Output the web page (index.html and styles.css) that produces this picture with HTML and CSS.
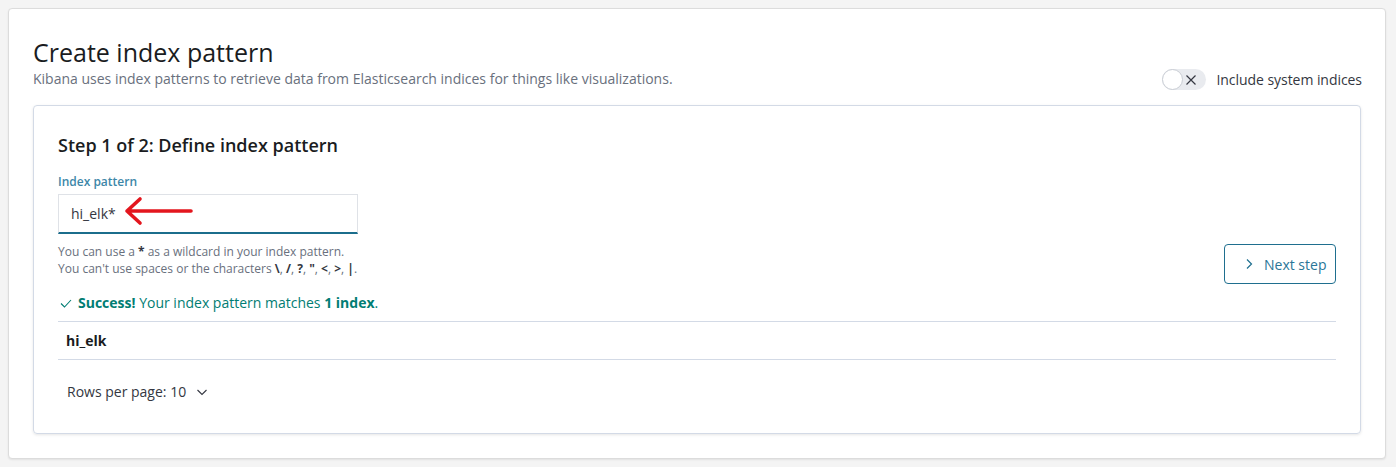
FILE: index.html
```html
<!DOCTYPE html>
<html>
<head>
<meta charset="utf-8">
<link rel="stylesheet" href="styles.css">
</head>
<body>
<div class="page">
  <div class="header">
    <div class="header-text">
      <h1 class="title">Create index pattern</h1>
      <p class="subtitle">Kibana uses index patterns to retrieve data from Elasticsearch indices for things like visualizations.</p>
    </div>
    <div class="switch-wrap">
      <span class="switch">
        <span class="knob"></span>
        <svg class="switch-x" width="12" height="12" viewBox="0 0 12 12"><path d="M1.5 1.5 L10.5 10.5 M10.5 1.5 L1.5 10.5" stroke="#343741" stroke-width="1.2" fill="none"/></svg>
      </span>
      <span class="switch-label">Include system indices</span>
    </div>
  </div>

  <div class="card">
    <h2 class="step-title">Step 1 of 2: Define index pattern</h2>
    <div class="form-line">
      <div class="form-row">
        <label class="field-label">Index pattern</label>
        <div class="input-wrap">
          <div class="input">hi_elk*</div>
          <svg class="annot" width="80" height="34" viewBox="0 0 80 34"><path d="M4 17 L68 17 M17 5 L4 17 L17 29" stroke="#e3161e" stroke-width="3.6" fill="none" stroke-linecap="round" stroke-linejoin="round"/></svg>
        </div>
        <div class="help">
          <div>You can use a <b>*</b> as a wildcard in your index pattern.</div>
          <div>You can't use spaces or the characters <b>\</b>, <b>/</b>, <b>?</b>, <b>"</b>, <b>&lt;</b>, <b>&gt;</b>, <b>|</b>.</div>
        </div>
      </div>
      <button class="next-btn">
        <svg width="16" height="16" viewBox="0 0 16 16"><path d="M6 3.5 L10.5 8 L6 12.5" stroke="#1f6f8f" stroke-width="1.2" fill="none"/></svg>
        <span>Next step</span>
      </button>
    </div>

    <div class="success">
      <svg width="14" height="14" viewBox="0 0 14 14"><path d="M2 7.5 L5.5 11 L12 4" stroke="#017d73" stroke-width="1.1" fill="none"/></svg>
      <span><b>Success!</b> Your index pattern matches <b>1 index</b>.</span>
    </div>

    <div class="table">
      <div class="row">hi_elk</div>
    </div>

    <div class="pager">
      <span>Rows per page: 10</span>
      <svg width="14" height="14" viewBox="0 0 14 14"><path d="M2.5 5 L7 9.5 L11.5 5" stroke="#343741" stroke-width="1.1" fill="none"/></svg>
    </div>
  </div>
</div>
</body>
</html>
```

FILE: styles.css
```css
html, body {
  margin: 0;
  padding: 0;
  background: #f4f4f4;
}
body {
  padding: 8px 10px 8px 8px;
  font-family: "Open Sans", "Liberation Sans", sans-serif;
  color: #343741;
}
.page {
  background: #fff;
  border: 1px solid #dcdcdc;
  border-radius: 4px;
  box-shadow: 0 1px 2px rgba(0,0,0,0.08);
  padding: 27px 24px 24px 24px;
  height: 398px;
}
.header {
  display: flex;
  justify-content: space-between;
  align-items: flex-end;
}
.title {
  margin: 0;
  font-size: 25px;
  line-height: 32px;
  font-weight: 400;
  color: #1a1c21;
}
.subtitle {
  margin: 1px 0 0 0;
  font-size: 14px;
  line-height: 20px;
  color: #69707d;
}
.switch-wrap {
  display: flex;
  align-items: center;
  gap: 10px;
  margin-bottom: -1px;
  margin-right: -1px;
}
.switch {
  position: relative;
  display: flex;
  align-items: center;
  justify-content: flex-end;
  width: 44px;
  height: 21px;
  border-radius: 11px;
  background: #e9ebef;
  box-sizing: border-box;
  padding-right: 9px;
}
.knob {
  position: absolute;
  left: 0;
  top: 0;
  width: 21px;
  height: 21px;
  border-radius: 50%;
  background: #fff;
  border: 1px solid #c9cdd4;
  box-sizing: border-box;
}
.switch-label {
  font-size: 14px;
  line-height: 20px;
  color: #343741;
  letter-spacing: -0.05px;
}
.card {
  margin-top: 16px;
  border: 1px solid #d3dae6;
  border-radius: 4px;
  box-shadow: 0 1px 3px rgba(0,0,0,0.10);
  padding: 25px 24px 24px 24px;
  height: 278px;
}
.step-title {
  margin: 0;
  font-size: 18px;
  line-height: 29px;
  font-weight: 600;
  color: #1a1c21;
}
.form-line {
  display: flex;
  justify-content: space-between;
  align-items: flex-end;
  margin-top: 12px;
}
.form-row {
  display: flex;
  flex-direction: column;
  margin-bottom: 6px;
}
.field-label {
  font-size: 12px;
  line-height: 20px;
  font-weight: 600;
  color: #3d87a8;
}
.input-wrap {
  position: relative;
  margin-top: 2px;
  width: 300px;
}
.input {
  box-sizing: border-box;
  height: 40px;
  border: 1px solid #dfe2e7;
  border-bottom: 2px solid #1b6d8c;
  background: #fff;
  padding: 0 12px;
  font-size: 14px;
  line-height: 38px;
  color: #343741;
}
.annot {
  position: absolute;
  left: 65px;
  top: 0px;
}
.help {
  margin-top: 9px;
  font-size: 12px;
  line-height: 17px;
  color: #69707d;
}
.help b {
  color: #343741;
}
.next-btn {
  display: flex;
  align-items: center;
  gap: 7px;
  box-sizing: border-box;
  width: 112px;
  height: 40px;
  padding: 0 0 0 16px;
  border: 1px solid #1f6f8f;
  border-radius: 4px;
  background: #fff;
  font-family: inherit;
  font-size: 14px;
  color: #2a7698;
  cursor: pointer;
  margin-bottom: -1px;
}
.success {
  display: flex;
  align-items: center;
  gap: 5px;
  margin-top: 10px;
  padding-left: 1px;
  font-size: 14px;
  line-height: 20px;
  color: #017d73;
}
.success b {
  font-weight: 700;
}
.table {
  margin-top: 8px;
  border-top: 1px solid #d3dae6;
  border-bottom: 1px solid #d3dae6;
}
.row {
  padding: 0 8px;
  height: 37px;
  line-height: 37px;
  font-size: 14px;
  font-weight: 700;
  color: #1a1c21;
}
.pager {
  display: flex;
  align-items: center;
  gap: 9px;
  margin-top: 22px;
  padding-left: 9px;
  font-size: 14px;
  line-height: 20px;
  color: #343741;
}
```
